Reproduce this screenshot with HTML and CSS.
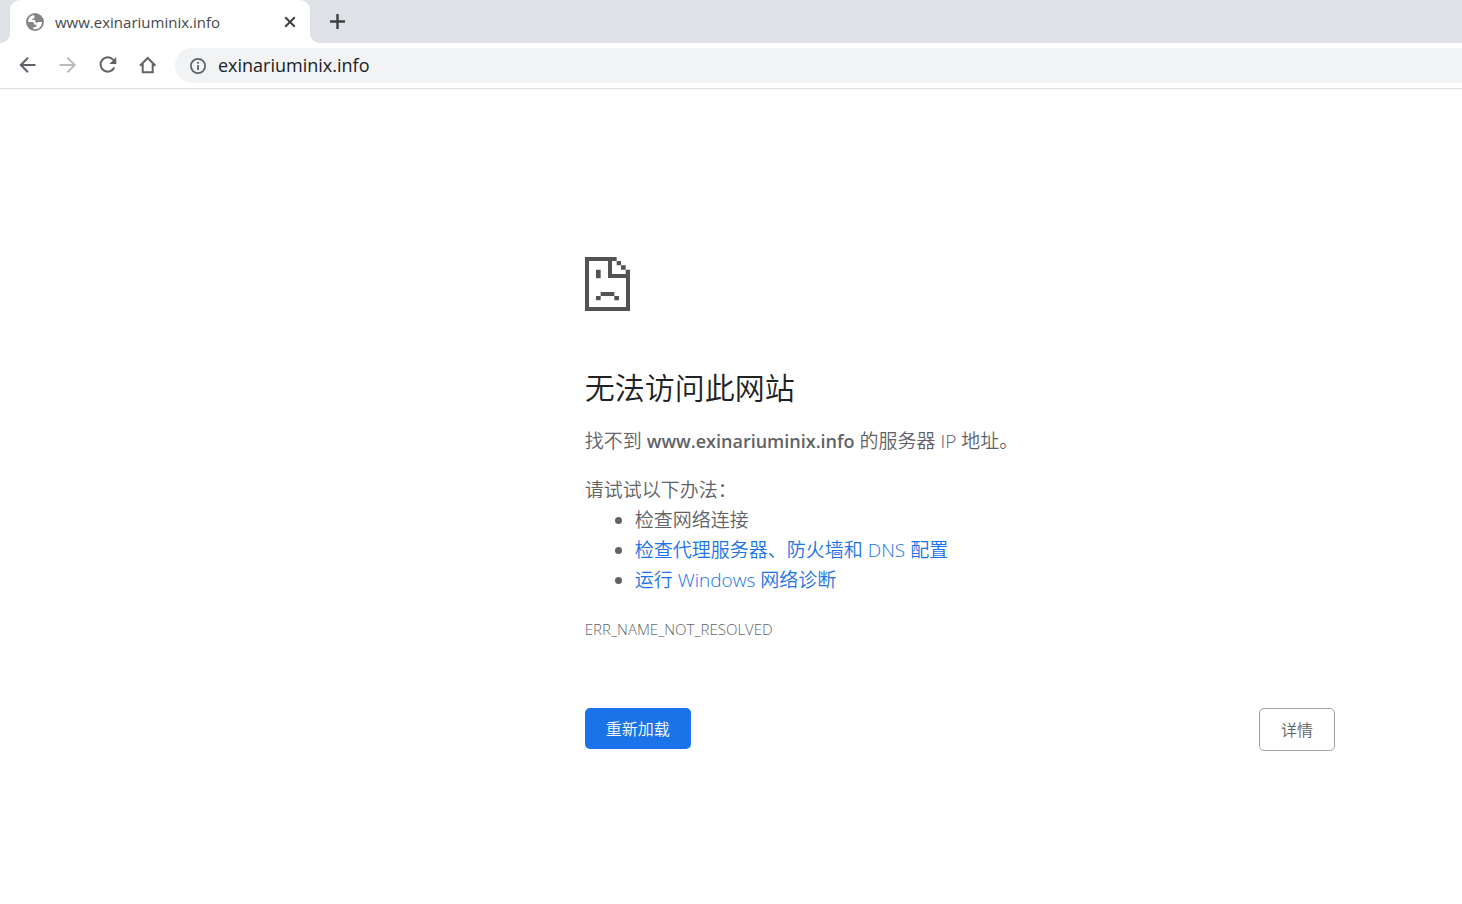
FILE: index.html
```html
<!DOCTYPE html>
<html lang="zh-CN">
<head>
<meta charset="utf-8">
<title>www.exinariuminix.info</title>
<link rel="stylesheet" href="styles.css">
</head>
<body>
<header class="browser">
  <div class="tab-strip">
    <div class="tab">
      <svg class="favicon" viewBox="0 0 18 18" aria-hidden="true"><circle cx="9" cy="9" r="9" fill="#858585"/><path d="M7.500 2C4 3 2 5.500 2 9h4c1 0 2 .6 2 1.600v1h1.500c.8 0 1 .5 1 1.200 0 .8-.5 1.200-1.500 1.200H7.500V16c4.500 1 8.500-2.300 8.500-7h-3.500c-.7 1-2 1-2.800.3-.8-.8-.7-1.600-.4-2.300H6.500V5.500h1c.8 0 1-.4 1-1V3.600z" fill="#fff"/></svg>
      <span class="tab-title">www.exinariuminix.info</span>
      <button class="tab-close" type="button" aria-label="关闭标签页"><svg width="12" height="12" viewBox="0 0 12 12"><path d="M1.200 1.200l9.600 9.600M10.800 1.200l-9.600 9.600" stroke="#3c4043" stroke-width="2"/></svg></button>
    </div>
    <button class="new-tab" type="button" aria-label="新标签页"><svg width="15" height="15" viewBox="0 0 15 15"><path d="M7.500 0v15M0 7.500h15" stroke="#3c4043" stroke-width="2.400"/></svg></button>
  </div>
  <nav class="toolbar">
    <button class="tool" type="button" aria-label="后退"><svg width="18" height="18" viewBox="0 0 18 18"><path d="M16.500 9H2M9 1.800L1.800 9 9 16.200" stroke="#5f6368" stroke-width="2" fill="none"/></svg></button>
    <button class="tool" type="button" aria-label="前进" disabled><svg width="18" height="18" viewBox="0 0 18 18"><path d="M.5 9h15M8.500 1.800L15.700 9l-7.200 7.200" stroke="#babcbe" stroke-width="2" fill="none"/></svg></button>
    <button class="tool" type="button" aria-label="重新加载"><svg width="18" height="18" viewBox="0 0 18 18"><path d="M14.500 4A7.200 7.200 0 1 0 15.300 11.500" stroke="#5f6368" stroke-width="2" fill="none"/><path d="M17.300 1v7h-7z" fill="#5f6368"/></svg></button>
    <button class="tool" type="button" aria-label="主页"><svg width="18" height="18" viewBox="0 0 18 18"><path d="M1 9.700L8.700 2l7.700 7.700M3.700 8v8.200h10V8" stroke="#5f6368" stroke-width="2" fill="none"/></svg></button>
    <label class="omnibox">
      <svg width="16" height="16" viewBox="0 0 16 16" aria-hidden="true"><circle cx="8" cy="8" r="7.100" stroke="#5f6368" stroke-width="1.800" fill="none"/><path d="M8 7v5M8 4v1.800" stroke="#5f6368" stroke-width="1.800"/></svg>
      <input class="address" type="text" value="exinariuminix.info" aria-label="地址栏">
    </label>
  </nav>
</header>
<main class="error-page">
  <svg class="sad-page" viewBox="0 0 135 162" aria-hidden="true"><path fill="#535353" d="M0 0h95v12H81v39h54v111H0zM12 12v138h111V63H69V12zM95 12h13v13H95zM108 25h14v13h-14zM122 38h13v13h-13zM33 38h14v26H33zM47 105h41v12H47zM33 117h14v13H33zM88 117h14v13H88z" fill-rule="evenodd"/></svg>
  <h1 class="title">无法访问此网站</h1>
  <p class="summary">找不到 <strong>www.exinariuminix.info</strong> 的服务器 IP 地址。</p>
  <div class="suggestions">
    <p class="lead">请试试以下办法：</p>
    <ul class="list">
      <li>检查网络连接</li>
      <li><a href="#proxy">检查代理服务器、防火墙和 DNS 配置</a></li>
      <li><a href="#diagnose">运行 Windows 网络诊断</a></li>
    </ul>
  </div>
  <p class="error-code">ERR_NAME_NOT_RESOLVED</p>
  <div class="actions">
    <button class="btn btn-primary" type="button">重新加载</button>
    <button class="btn btn-outline" type="button">详情</button>
  </div>
</main>
</body>
</html>
```
FILE: styles.css
```css
* { box-sizing: border-box; }
body {
  margin: 0;
  background: #fff;
  color: #5f6368;
  font-family: "Open Sans", "Noto Sans CJK SC", sans-serif;
  font-size: 18px;
  line-height: 30px;
}
button { border: 0; padding: 0; background: none; font: inherit; color: inherit; }
svg { display: block; flex: none; }
h1, p, ul { margin: 0; padding: 0; }

.browser { border-bottom: 1px solid #dadce0; }
.tab-strip {
  display: flex;
  align-items: center;
  gap: 20px;
  height: 43px;
  padding-left: 10px;
  background: #dee1e6;
}
.tab {
  position: relative;
  display: flex;
  align-items: center;
  width: 300px;
  height: 43px;
  padding: 0 14px 0 16px;
  gap: 11px;
  border-radius: 10px 10px 0 0;
  background: #fff;
}
.tab::before, .tab::after {
  content: "";
  position: absolute;
  bottom: 0;
  width: 10px;
  height: 10px;
}
.tab::before { right: 100%; background: radial-gradient(circle at 0 0, transparent 10px, #fff 10px); }
.tab::after { left: 100%; background: radial-gradient(circle at 100% 0, transparent 10px, #fff 10px); }
.favicon { width: 18px; height: 18px; }
.tab-title { flex: 1; font-size: 15px; color: #45484c; }
.toolbar { display: flex; align-items: center; height: 45px; padding-left: 8px; }
.tool { display: grid; place-items: center; width: 40px; height: 40px; margin-bottom: 2px; }
.omnibox {
  flex: 1;
  display: flex;
  align-items: center;
  gap: 12px;
  height: 35px;
  margin-left: 7px;
  padding-left: 15px;
  border-radius: 18px 0 0 18px;
  background: #f1f3f4;
}
.address {
  flex: 1;
  height: 34px;
  margin-bottom: 2px;
  border: 0;
  padding: 0;
  outline: 0;
  background: none;
  color: #202124;
  font: inherit;
}

.error-page {
  width: 100%;
  max-width: 1335px;
  padding: 168px 0 40px 40%;
  font-size: 19px;
  font-weight: 350;
}
.sad-page { width: 45px; height: 54px; }
.title { margin-top: 55px; font-size: 30px; font-weight: 350; line-height: 44px; color: #202124; }
.summary { margin-top: 16px; }
.summary strong { font-size: 18px; font-weight: 600; }
.suggestions { margin-top: 19px; }
.list { padding-left: 50px; }
.list a { color: #1a73e8; text-decoration: none; }
.error-code { margin-top: 19px; font-size: 15px; font-weight: 300; }
.actions { display: flex; justify-content: space-between; align-items: flex-start; margin-top: 64px; }
.btn { border-radius: 5px; font-size: 16px; line-height: 25px; padding: 9px 21px 7px; }
.btn-primary { background: #1a73e8; color: #fff; }
.btn-outline { border: 1px solid #9aa0a6; background: #fff; }
```
